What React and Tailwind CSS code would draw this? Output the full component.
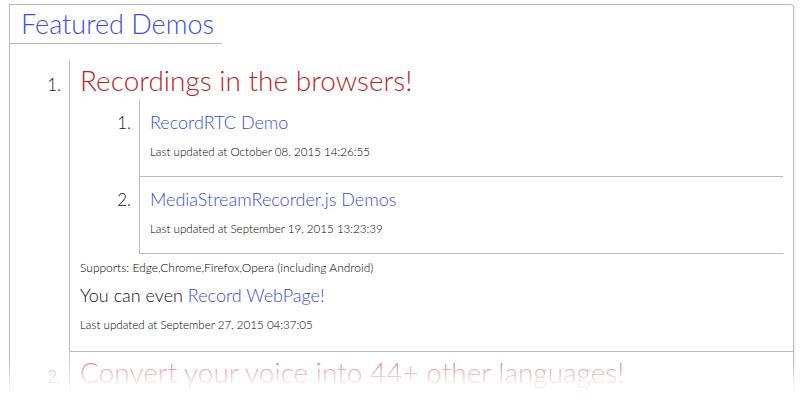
import React from 'react';

const font = { fontFamily: 'Lato, "Open Sans", sans-serif' };

const SubItem = ({ n, title, updated }) => (
  <li className="flex items-baseline">
    <div className="w-[59px] shrink-0 pr-[8px] text-right text-[17px] font-light text-[#222]">{n}.</div>
    <div className="flex-1 border-b border-l border-[#bbb] pl-[10px] pt-[10px] pb-[15px]">
      <a className="block text-[18px] leading-[24px] font-light text-[#3650e0]">{title}</a>
      <div className="mt-[9px] text-[11.6px] leading-[18px] font-light text-black">Last updated at {updated}</div>
    </div>
  </li>
);

const App = () => {
  return (
    <div className="relative h-[400px] w-[800px] overflow-hidden bg-white" style={font}>
      <div className="ml-[9px] mt-[4px] w-[785px] rounded-tr-[4px] border border-b-0 border-[#bbb] shadow-[1px_1px_2px_rgba(0,0,0,0.08)]">
        <h2 className="w-[212px] whitespace-nowrap border-b border-[#bbb] pl-[11px] text-[27px] leading-[38px] font-light text-[#3650e0]">
          Featured Demos
        </h2>

        <ol className="mt-[16px]">
          <li className="flex items-baseline">
            <div className="w-[59px] shrink-0 pr-[8px] text-right text-[17px] font-light text-[#222]">1.</div>
            <div className="flex-1 border-b border-l border-[#bbb] pb-[17px] pl-[10px] pr-[10px]">
              <h3 className="whitespace-nowrap text-[28px] leading-[40px] font-light text-[#c21f1f]">Recordings in the browsers!</h3>
              <ol>
                <SubItem n={1} title="RecordRTC Demo" updated="October 08, 2015 14:26:55" />
                <SubItem n={2} title="MediaStreamRecorder.js Demos" updated="September 19, 2015 13:23:39" />
              </ol>
              <div className="mt-[5px] text-[12px] leading-[18px] font-light text-black">
                Supports: Edge,Chrome,Firefox,Opera (including Android)
              </div>
              <div className="mt-[6px] text-[18px] leading-[24px] font-light text-[#111]">
                You can even <a className="text-[#3650e0]">Record WebPage!</a>
              </div>
              <div className="mt-[9px] text-[11.6px] leading-[18px] font-light text-black">
                Last updated at September 27, 2015 04:37:05
              </div>
            </div>
          </li>
          <li className="flex items-baseline">
            <div className="w-[59px] shrink-0 pr-[8px] text-right text-[17px] font-light text-[#aaa]">2.</div>
            <div className="flex-1 border-l border-[#ccc] pl-[10px] pr-[10px]">
              <h3 className="whitespace-nowrap text-[28px] leading-[40px] font-light text-[#e58a88]">
                Convert your voice into 44+ other languages!
              </h3>
            </div>
          </li>
        </ol>
      </div>
      <div className="pointer-events-none absolute inset-x-0 bottom-0 h-[38px] bg-gradient-to-b from-white/0 via-white/75 to-white" />
    </div>
  );
};

export default App;
